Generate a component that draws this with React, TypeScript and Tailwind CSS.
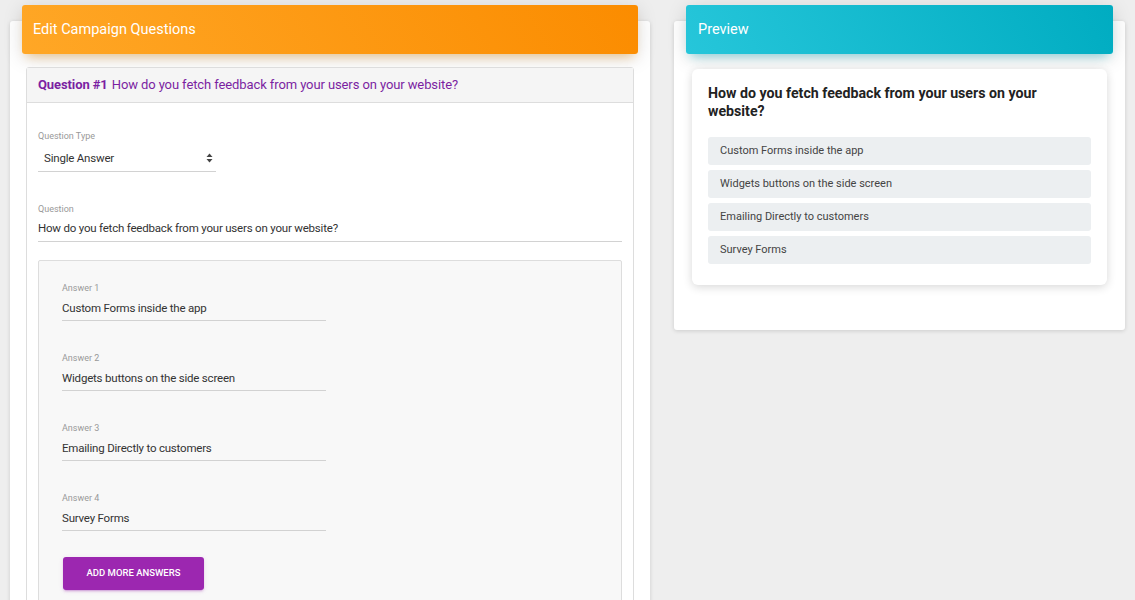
const ANSWERS = [
  "Custom Forms inside the app",
  "Widgets buttons on the side screen",
  "Emailing Directly to customers",
  "Survey Forms",
];

const QUESTION = "How do you fetch feedback from your users on your website?";

function SelectArrows() {
  return (
    <svg width="7" height="10" viewBox="0 0 7 10" className="text-[#444]">
      <path d="M3.5 0.5 L6.5 4 H0.5 Z" fill="currentColor" />
      <path d="M3.5 9.5 L6.5 6 H0.5 Z" fill="currentColor" />
    </svg>
  );
}

function AnswerField({ label, value, first }: { label: string; value: string; first?: boolean }) {
  return (
    <div className={first ? "w-[264px]" : "mt-[31px] w-[264px]"}>
      <div className="h-[12px] text-[9px] leading-[12px] text-[#999]">{label}</div>
      <div className="mt-[6px] border-b border-[#d2d2d2] pb-[4px] text-[11.5px] leading-[16px] tracking-[-0.2px] text-[#333]">
        {value}
      </div>
    </div>
  );
}

export default function App() {
  return (
    <div className="min-h-screen bg-[#eeeeee] font-['Roboto','Liberation_Sans',sans-serif]">
      <div className="grid grid-cols-[640px_451px] items-start gap-6 pl-[10px] pt-[21px]">
        {/* Edit panel */}
        <section className="rounded-[3px] bg-white shadow-[0_1px_4px_0_rgba(0,0,0,0.14)]">
          <div className="mx-3 -mt-4 flex h-[49px] items-center rounded-[3px] bg-[linear-gradient(60deg,#ffa726,#fb8c00)] px-[11px] text-[14.5px] font-normal text-white shadow-[0_4px_20px_0_rgba(0,0,0,0.14),0_7px_10px_-5px_rgba(255,152,0,0.4)]">
            Edit Campaign Questions
          </div>

          <div className="mx-4 mt-[13px] rounded-[3px] border border-[#dddddd]">
            <div className="flex h-[35px] items-center border-b border-[#dddddd] bg-[#f5f5f5] px-[11px] text-[13px] tracking-[-0.1px] text-[#7b1fa2]">
              <span className="font-bold">Question #1</span>
              <span className="ml-[4px]">{QUESTION}</span>
            </div>

            <div className="px-[11px] pt-[27px]">
              <div className="h-[12px] text-[9px] leading-[12px] text-[#999]">Question Type</div>
              <div className="mt-[8px] flex w-[178px] items-center justify-between border-b border-[#d2d2d2] pb-[5px] pl-[6px] pr-[3px] text-[11.5px] leading-[16px] tracking-[-0.2px] text-[#333]">
                <span>Single Answer</span>
                <SelectArrows />
              </div>

              <div className="mt-[31px] h-[12px] text-[9px] leading-[12px] text-[#999]">Question</div>
              <div className="mt-[5px] border-b border-[#d2d2d2] pb-[5px] text-[11.5px] leading-[16px] tracking-[-0.2px] text-[#333]">
                {QUESTION}
              </div>

              <div className="mt-[18px] rounded-[2px] border border-[#dddddd] bg-[#f8f8f8] px-[23px] pb-[60px] pt-[21px]">
                {ANSWERS.map((a, i) => (
                  <AnswerField key={a} label={`Answer ${i + 1}`} value={a} first={i === 0} />
                ))}
                <button className="ml-px mt-[26px] flex h-[33px] w-[141px] items-center justify-center rounded-[3px] bg-[#9c27b0] text-[9.5px] font-medium uppercase text-white shadow-[0_2px_2px_0_rgba(156,39,176,0.14),0_3px_1px_-2px_rgba(156,39,176,0.2),0_1px_5px_0_rgba(156,39,176,0.12)]">
                  Add more answers
                </button>
              </div>
            </div>
          </div>
        </section>

        {/* Preview panel */}
        <section className="rounded-[3px] bg-white pb-[45px] shadow-[0_1px_4px_0_rgba(0,0,0,0.14)]">
          <div className="mx-3 -mt-4 flex h-[49px] items-center rounded-[3px] bg-[linear-gradient(60deg,#26c6da,#00acc1)] px-3 text-[14.5px] font-normal text-white shadow-[0_4px_20px_0_rgba(0,0,0,0.14),0_7px_10px_-5px_rgba(0,188,212,0.4)]">
            Preview
          </div>

          <div className="mx-[18px] mt-[15px] rounded-[6px] bg-white px-4 pb-[21px] pt-[15px] shadow-[0_2px_10px_0_rgba(0,0,0,0.16)]">
            <div className="text-[14.2px] font-bold leading-[18px] text-[#222]">{QUESTION}</div>
            <div className="mt-[17px] flex flex-col gap-[5px]">
              {ANSWERS.map((a) => (
                <div
                  key={a}
                  className="flex h-[28px] items-center rounded-[3px] bg-[#eceff1] px-3 text-[11px] text-[#444]"
                >
                  {a}
                </div>
              ))}
            </div>
          </div>
        </section>
      </div>
    </div>
  );
}
